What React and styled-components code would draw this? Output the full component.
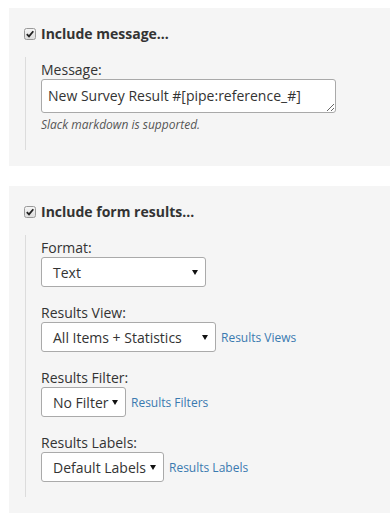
import React from "react";
import styled, { createGlobalStyle } from "styled-components";

const Global = createGlobalStyle`
  html, body { margin: 0; padding: 0; background: #fff; }
  body { font-family: "Open Sans", "Liberation Sans", sans-serif; color: #333; }
`;

const Page = styled.div`
  padding: 8px 0 8px 9px;
  display: flex;
  flex-direction: column;
  gap: 20px;
`;

const Panel = styled.section`
  background: #f5f5f5;
  padding: 16px 0 16px 15px;
`;

const Heading = styled.label`
  display: flex;
  align-items: center;
  gap: 5px;
  font-size: 14px;
  font-weight: 700;
  line-height: 20px;
  color: #333;
  height: 20px;
  margin-bottom: 13px;
`;

const Indent = styled.div`
  margin-left: 1px;
  border-left: 1px solid #dcdcdc;
  padding: 4px 0 0 15px;
  display: flex;
  flex-direction: column;
`;

const Group = styled.div`
  display: flex;
  flex-direction: column;
  margin-bottom: 17px;
  &:last-child {
    margin-bottom: 15px;
  }
`;

const Label = styled.div`
  font-size: 14px;
  line-height: 18px;
  color: #333;
`;

const TextArea = styled.textarea`
  box-sizing: border-box;
  width: 295px;
  height: 34px;
  padding: 6px 6px;
  border: 1px solid #a9a9a9;
  border-radius: 3px;
  font-family: "Open Sans", "Liberation Sans", sans-serif;
  font-size: 14px;
  line-height: 20px;
  color: #333;
  background: #fff;
  resize: vertical;
  overflow: hidden;
  outline: none;
`;

const Help = styled.div`
  font-size: 12px;
  font-style: italic;
  line-height: 18px;
  margin-top: 3px;
  margin-bottom: 1px;
  color: #555;
`;

const Row = styled.div`
  display: flex;
  align-items: center;
  gap: 5px;
`;

const SelectBox = styled.div`
  box-sizing: border-box;
  width: ${(p) => p.$w}px;
  height: 30px;
  display: flex;
  align-items: center;
  justify-content: space-between;
  padding: 0 7px 0 11px;
  border: 1px solid #aaa;
  border-radius: 3px;
  background: #fff;
  font-size: 14px;
  color: #333;
  white-space: nowrap;
`;

const Link = styled.a`
  font-size: 12px;
  color: #3a7ab0;
  text-decoration: none;
  line-height: 16px;
  margin-top: 1px;
`;

const Check = () => (
  <svg width="12" height="12" viewBox="0 0 12 12" style={{ flex: "none" }}>
    <defs>
      <linearGradient id="cbg" x1="0" y1="0" x2="0" y2="1">
        <stop offset="0" stopColor="#f6f6f6" />
        <stop offset="1" stopColor="#dcdcdc" />
      </linearGradient>
    </defs>
    <rect x="0.5" y="0.5" width="11" height="11" rx="2" fill="url(#cbg)" stroke="#999" />
    <path d="M2.8 6.2 L5 8.4 L9.3 3.2" fill="none" stroke="#222" strokeWidth="1.8" />
  </svg>
);

const Arrow = () => (
  <svg width="6" height="6" viewBox="0 0 6 6" style={{ flex: "none" }}>
    <path d="M0 1 L6 1 L3 6 Z" fill="#111" />
  </svg>
);

const Select = ({ w, value }) => (
  <SelectBox $w={w}>
    <span>{value}</span>
    <Arrow />
  </SelectBox>
);

export default function App() {
  return (
    <>
      <Global />
      <Page>
        <Panel>
          <Heading>
            <Check />
            Include message...
          </Heading>
          <Indent>
            <Group>
              <Label>Message:</Label>
              <TextArea defaultValue="New Survey Result #[pipe:reference_#]" />
              <Help>Slack markdown is supported.</Help>
            </Group>
          </Indent>
        </Panel>
        <Panel>
          <Heading>
            <Check />
            Include form results...
          </Heading>
          <Indent>
            <Group>
              <Label>Format:</Label>
              <Select w={165} value="Text" />
            </Group>
            <Group>
              <Label>Results View:</Label>
              <Row>
                <Select w={175} value="All Items + Statistics" />
                <Link href="#">Results Views</Link>
              </Row>
            </Group>
            <Group>
              <Label>Results Filter:</Label>
              <Row>
                <Select w={85} value="No Filter" />
                <Link href="#">Results Filters</Link>
              </Row>
            </Group>
            <Group>
              <Label>Results Labels:</Label>
              <Row>
                <Select w={123} value="Default Labels" />
                <Link href="#">Results Labels</Link>
              </Row>
            </Group>
          </Indent>
        </Panel>
      </Page>
    </>
  );
}
